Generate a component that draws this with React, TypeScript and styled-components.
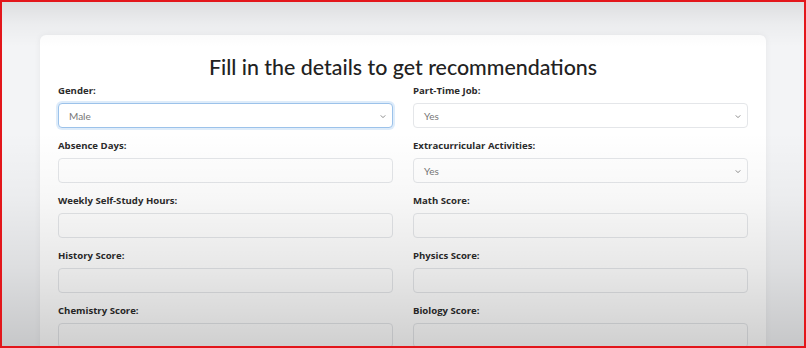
import styled, { createGlobalStyle } from "styled-components";

const GlobalStyle = createGlobalStyle`
  html, body {
    margin: 0;
    padding: 0;
  }
  body {
    background: #f3f4f6;
    font-family: Lato, "Open Sans", Arial, sans-serif;
  }
`;

const Frame = styled.div`
  position: relative;
  width: 806px;
  height: 348px;
  box-sizing: border-box;
  border: 2px solid #e3161b;
  background: #f3f4f6;
  overflow: hidden;
  padding: 33px 38px 0 38px;
`;

const Vignette = styled.div`
  position: absolute;
  inset: 0;
  pointer-events: none;
  background: linear-gradient(
    to bottom,
    rgba(0, 0, 0, 0.09) 0px,
    rgba(0, 0, 0, 0.03) 22px,
    rgba(0, 0, 0, 0) 45px,
    rgba(0, 0, 0, 0) 130px,
    rgba(0, 0, 0, 0.03) 195px,
    rgba(0, 0, 0, 0.09) 265px,
    rgba(0, 0, 0, 0.19) 348px
  );
`;

const Card = styled.section`
  background: #ffffff;
  border-radius: 6px;
  box-shadow: 0 0 6px rgba(0, 0, 0, 0.06);
  padding: 18px 18px 30px 18px;
  height: 400px;
  box-sizing: border-box;
`;

const Title = styled.h2`
  margin: 0 0 4px 0;
  text-align: center;
  font-size: 21.4px;
  font-weight: 500;
  color: #222;
  line-height: 28px;
`;

const Grid = styled.div`
  display: grid;
  grid-template-columns: 1fr 1fr;
  column-gap: 20px;
  row-gap: 12px;
`;

const Field = styled.div`
  display: flex;
  flex-direction: column;
`;

const Label = styled.label`
  font-family: "Open Sans", Arial, sans-serif;
  font-size: 9.6px;
  font-weight: 700;
  color: #2b2b2b;
  line-height: 12px;
  margin-bottom: 6px;
`;

const Control = styled.div<{ $focused?: boolean }>`
  position: relative;
  height: 25px;
  box-sizing: border-box;
  border: 1px solid ${(p) => (p.$focused ? "#9cc2ea" : "#e4e6e9")};
  border-radius: 4px;
  background: #fff;
  box-shadow: ${(p) => (p.$focused ? "0 0 0 2px rgba(160, 200, 240, 0.35)" : "none")};
  display: flex;
  align-items: center;
  padding: 0 10px;
  font-size: 10px;
  color: #777;
`;

const Chevron = styled.svg`
  position: absolute;
  right: 6px;
  top: 50%;
  margin-top: -2px;
  width: 6px;
  height: 5px;
`;

type FieldDef = { label: string; value?: string; select?: boolean; focused?: boolean };

const fields: FieldDef[] = [
  { label: "Gender:", value: "Male", select: true, focused: true },
  { label: "Part-Time Job:", value: "Yes", select: true },
  { label: "Absence Days:" },
  { label: "Extracurricular Activities:", value: "Yes", select: true },
  { label: "Weekly Self-Study Hours:" },
  { label: "Math Score:" },
  { label: "History Score:" },
  { label: "Physics Score:" },
  { label: "Chemistry Score:" },
  { label: "Biology Score:" },
];

const App = () => {
  return (
    <>
      <GlobalStyle />
      <Frame>
        <Card>
          <Title>Fill in the details to get recommendations</Title>
          <Grid>
            {fields.map((f) => (
              <Field key={f.label}>
                <Label>{f.label}</Label>
                <Control $focused={f.focused}>
                  {f.value}
                  {f.select && (
                    <Chevron viewBox="0 0 8 6">
                      <path d="M1 1.5 L4 4.5 L7 1.5" fill="none" stroke="#888" strokeWidth="1.3" />
                    </Chevron>
                  )}
                </Control>
              </Field>
            ))}
          </Grid>
        </Card>
        <Vignette />
      </Frame>
    </>
  );
};

export default App;
